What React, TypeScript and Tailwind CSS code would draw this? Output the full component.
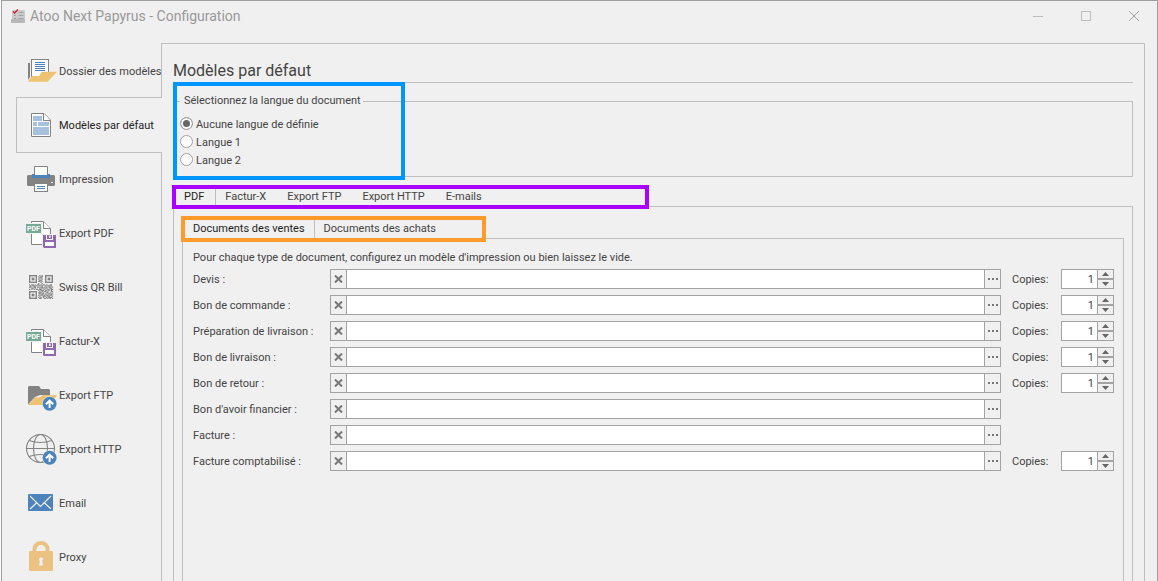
import { useState, type ReactNode } from "react";

function UploadBadge() {
  return (
    <g>
      <circle cx="24.600" cy="24.800" r="7.500" fill="#f0f0f0" />
      <circle cx="24.600" cy="24.800" r="7" fill="#4c83bd" />
      <path d="M24.600 29V22M21 25.200l3.600-3.600 3.600 3.600" fill="none" stroke="#fff" strokeWidth="2" />
    </g>
  );
}

function IconBox({ children }: { children: ReactNode }) {
  return (
    <svg viewBox="0 0 32 32" className="size-8 shrink-0" aria-hidden="true">
      {children}
    </svg>
  );
}

function FolderDocsIcon() {
  return (
    <IconBox>
      <path d="M3 8h2v14l-2 3z" fill="#838383" />
      <rect x="6.5" y="4.5" width="17" height="17" fill="#fff" stroke="#838383" />
      <path d="M10 7.5h10M10 9.5h10M10 11.5h10M10 13.5h10M10 15.5h10" stroke="#4c83bd" />
      <path d="M3 26.8L7 21h7l3-4.2h15L22.5 26.8z" fill="#edc271" />
    </IconBox>
  );
}

function TemplateIcon() {
  return (
    <IconBox>
      <path d="M6.5 4.5h12.5l6.5 6.5v16.5h-19z" fill="#fff" stroke="#838383" />
      <path d="M18.500 4.500v7h7" fill="#fff" stroke="#838383" />
      <path d="M8 7h9v5H8zM8 13h4v4H8zM13 13h11v4H13zM8 18h16v8H8z" fill="#a7c0dd" />
    </IconBox>
  );
}

function PrinterIcon() {
  return (
    <IconBox>
      <path d="M3 12h26l1 1v9l-1 1H3l-1-1v-9z" fill="#838383" />
      <path d="M7 11h18v4H7z" fill="#4c83bd" />
      <path d="M9.5 13V3.500h13V13z" fill="#fff" stroke="#838383" />
      <path d="M8 13.500h16" stroke="#4c83bd" strokeWidth="3" />
      <rect x="26" y="19" width="2" height="1" fill="#fff" />
      <rect x="9.500" y="20.500" width="13" height="8" fill="#fff" stroke="#838383" />
      <path d="M12 23.500h8M12 25.500h8" stroke="#4c83bd" />
    </IconBox>
  );
}

function PdfSaveIcon() {
  return (
    <IconBox>
      <path d="M6.500 4.500h12l7 7v16h-19z" fill="#fff" stroke="#838383" />
      <path d="M18.500 4.500v7h7" fill="#fff" stroke="#838383" />
      <rect x="0" y="6" width="17" height="11" fill="#f0f0f0" />
      <rect x="1" y="7" width="15" height="9" fill="#78a896" />
      <text x="8.500" y="14" textAnchor="middle" fontSize="7" fontWeight="700" fill="#fff" fontFamily="Roboto, sans-serif">
        PDF
      </text>
      <rect x="17" y="17" width="15" height="15" fill="#f0f0f0" />
      <path d="M18 18h13v13H19l-1-1z" fill="#9068b0" />
      <path d="M21 18h7v5h-7zM20 25h9v4h-9z" fill="#fff" />
      <path d="M22 18h5v4h-5z" fill="#9068b0" />
      <path d="M24 18.500h1.500v2.500H24z" fill="#fff" />
    </IconBox>
  );
}

const QR_ROWS = [
  "000000000101000000000",
  "000000001011000000000",
  "000000000110000000000",
  "000000001001000000000",
  "000000000110000000000",
  "000000001101000000000",
  "000000000010000000000",
  "000000001001000000000",
  "101101011010110100110",
  "010110100101001011010",
  "110011011011010101101",
  "001101000101101100110",
  "101010110110010011011",
  "000000001011101101010",
  "000000000101011010011",
  "000000001110100110100",
  "000000000101101001011",
  "000000001011010110110",
  "000000000100111011001",
  "000000001010100101110",
  "000000000110011010101",
];

const QR_MODULES = QR_ROWS.flatMap((row, y) =>
  row.split("").map((cell, x) => (cell === "1" ? `M${x} ${y}h1.100v1.100h-1.100z` : "")),
).join("");

const QR_FINDERS = [
  [0, 0],
  [14, 0],
  [0, 14],
];

function QrIcon() {
  return (
    <IconBox>
      <g transform="translate(4 4) scale(1.143)" fill="#838383">
        <path d={QR_MODULES} />
        {QR_FINDERS.map(([x, y]) => (
          <g key={`${x}-${y}`}>
            <rect x={x + 0.6} y={y + 0.6} width="5.8" height="5.8" fill="none" stroke="#838383" strokeWidth="1.2" />
            <rect x={x + 2.3} y={y + 2.3} width="2.4" height="2.4" />
          </g>
        ))}
      </g>
    </IconBox>
  );
}

function FolderUploadIcon() {
  return (
    <IconBox>
      <path d="M4 7h10l2 3h8l1 1v5H15l-5 2-7 7.500V8z" fill="#838383" />
      <path d="M3 26l7-7.500h4L18 16h14l-6 10z" fill="#edc271" />
      <UploadBadge />
    </IconBox>
  );
}

function GlobeUploadIcon() {
  return (
    <IconBox>
      <g fill="none" stroke="#838383" strokeWidth="1.1">
        <circle cx="15.500" cy="15.500" r="14" />
        <ellipse cx="15.500" cy="15.500" rx="7" ry="14" />
        <path d="M1.500 15.500h28M4 7.500q11.500 4 23 0M4 23.500q11.500-4 23 0" />
      </g>
      <UploadBadge />
    </IconBox>
  );
}

function MailIcon() {
  return (
    <IconBox>
      <rect x="3" y="7" width="25" height="17" rx="1" fill="#4c83bd" />
      <path d="M5 9l10.500 10.500L26 9M5 22l7-6.500M26 22l-7-6.500" fill="none" stroke="#f0f0f0" strokeWidth="1.200" />
    </IconBox>
  );
}

function LockIcon() {
  return (
    <IconBox>
      <path d="M9.500 11V8a6.500 6 0 0 1 13 0V11" fill="none" stroke="#ebc282" strokeWidth="4" />
      <rect x="4" y="10" width="24" height="20" rx="1" fill="#ebc282" />
      <path d="M16 16.500a2 2 0 0 1 1.200 3.600l.8 4.400h-4l.8-4.400A2 2 0 0 1 16 16.500z" fill="#f0f0f0" />
    </IconBox>
  );
}

function AppIcon() {
  return (
    <svg viewBox="0 0 15 15" className="size-[15px]" aria-hidden="true">
      <rect x="1" y="1" width="13" height="11" rx="1" fill="#cbcbcb" />
      <rect x="0" y="10" width="14" height="4" rx="1" fill="#b8b8b8" />
      <path d="M7.500 3.500h5M7.500 6.500h5M3 6.500h2M3 9.500h2M7.500 9.500h5" stroke="#a2a2a2" />
      <path d="M2 2.500l1.500 1.500L7 .5" fill="none" stroke="#c22838" strokeWidth="1.500" />
    </svg>
  );
}

const SECTIONS = [
  { label: "Dossier des modèles", Icon: FolderDocsIcon },
  { label: "Modèles par défaut", Icon: TemplateIcon },
  { label: "Impression", Icon: PrinterIcon },
  { label: "Export PDF", Icon: PdfSaveIcon },
  { label: "Swiss QR Bill", Icon: QrIcon },
  { label: "Factur-X", Icon: PdfSaveIcon },
  { label: "Export FTP", Icon: FolderUploadIcon },
  { label: "Export HTTP", Icon: GlobeUploadIcon },
  { label: "Email", Icon: MailIcon },
  { label: "Proxy", Icon: LockIcon },
];

const LANGUAGES = ["Aucune langue de définie", "Langue 1", "Langue 2"];
const OUTPUTS = ["PDF", "Factur-X", "Export FTP", "Export HTTP", "E-mails"];
const FAMILIES = ["Documents des ventes", "Documents des achats"];

const DOCUMENTS = [
  { id: "devis", label: "Devis :", copies: true },
  { id: "commande", label: "Bon de commande :", copies: true },
  { id: "preparation", label: "Préparation de livraison :", copies: true },
  { id: "livraison", label: "Bon de livraison :", copies: true },
  { id: "retour", label: "Bon de retour :", copies: true },
  { id: "avoir", label: "Bon d'avoir financier :", copies: false },
  { id: "facture", label: "Facture :", copies: false },
  { id: "comptabilise", label: "Facture comptabilisé :", copies: true },
];

function TitleBar() {
  return (
    <header className="flex h-[30px] shrink-0 items-center justify-between text-[#999999]">
      <div className="flex items-center gap-1 pl-[9px]">
        <AppIcon />
        <h1 className="text-[14px] leading-5">Atoo Next Papyrus - Configuration</h1>
      </div>
      <div className="-mr-px flex self-stretch">
        <button type="button" aria-label="Réduire" className="flex w-12 items-center justify-center">
          <svg viewBox="0 0 10 10" className="size-2.5"><path d="M0 5.500h10" stroke="#bdbdbd" /></svg>
        </button>
        <button type="button" aria-label="Agrandir" className="flex w-12 items-center justify-center">
          <svg viewBox="0 0 10 10" className="size-2.5"><path d="M.5 .5h9v9h-9z" fill="none" stroke="#bdbdbd" /></svg>
        </button>
        <button type="button" aria-label="Fermer" className="flex w-12 items-center justify-center">
          <svg viewBox="0 0 10 10" className="size-2.5"><path d="M0 0l10 10M10 0L0 10" stroke="#a6a6a6" /></svg>
        </button>
      </div>
    </header>
  );
}

function Sidebar() {
  const [active, setActive] = useState(1);
  return (
    <nav className="flex w-[146px] shrink-0 flex-col pt-px">
      {SECTIONS.map(({ label, Icon }, i) => (
        <button
          key={label}
          type="button"
          onClick={() => setActive(i)}
          className={
            i === active
              ? "-my-px flex h-14 shrink-0 items-center gap-0.5 border-y border-l border-[#bfbfbf] pl-2 text-left text-[#1e1e1e]"
              : "flex h-[54px] shrink-0 items-center gap-0.5 border-r border-l border-l-transparent border-r-[#bfbfbf] pl-2 text-left"
          }
        >
          <Icon />
          <span className="pt-0.5 whitespace-nowrap">{label}</span>
        </button>
      ))}
    </nav>
  );
}

function LanguageGroup() {
  const [language, setLanguage] = useState(0);
  return (
    <div className="relative mt-[9px]">
      <fieldset className="h-[85px] min-w-0 border border-[#bfbfbf] pl-1.5">
        <legend className="pr-0.5 pl-1 leading-[18px]">Sélectionnez la langue du document</legend>
        <div className="flex flex-col items-start pt-1">
          {LANGUAGES.map((name, i) => (
            <label key={name} className="flex h-[18px] items-center gap-[3px]">
              <input
                type="radio"
                name="language"
                checked={i === language}
                onChange={() => setLanguage(i)}
                className="size-[13px] appearance-none rounded-full border border-[#a3a3a3] bg-white checked:bg-[#666666] checked:shadow-[inset_0_0_0_2px_#ffffff]"
              />
              <span className="pt-[3px]">{name}</span>
            </label>
          ))}
        </div>
      </fieldset>
      <div className="pointer-events-none absolute -top-[10px] left-0 h-[98px] w-[232px] border-4 border-[#0095ff]" />
    </div>
  );
}

function Tabs({ names, tone }: { names: string[]; tone: "outer" | "inner" }) {
  const [active, setActive] = useState(0);
  return (
    <div role="tablist" className={tone === "outer" ? "flex h-5" : "flex h-[22px] pt-0.5"}>
      {names.map((name, i) => (
        <button
          key={name}
          type="button"
          role="tab"
          aria-selected={i === active}
          onClick={() => setActive(i)}
          className={
            i === active
              ? tone === "outer"
                ? "border-x border-[#bfbfbf] pt-0.5 pr-[11px] pl-2.5 text-[#1e1e1e]"
                : "border-x border-[#bfbfbf] pt-0.5 pr-[9px] pl-2.5 text-[#1e1e1e]"
              : tone === "outer"
                ? "pt-0.5 pr-3 pl-[9px]"
                : "px-[9px] pt-0.5"
          }
        >
          {name}
        </button>
      ))}
    </div>
  );
}

function Spinner({ id }: { id: string }) {
  const [count, setCount] = useState(1);
  return (
    <div className="flex h-5 w-[53px] border border-[#a3a3a3] bg-white">
      <input
        id={id}
        inputMode="numeric"
        value={count}
        onChange={(e) => setCount(Number(e.target.value) || 0)}
        className="w-full min-w-0 bg-white pt-0.5 pr-[3px] text-right outline-none"
      />
      <div className="flex w-4 shrink-0 flex-col gap-0.5 border-l border-[#a3a3a3] bg-[#a3a3a3]">
        <button type="button" aria-label="Augmenter" onClick={() => setCount(count + 1)} className="flex flex-1 items-center justify-center bg-[#f0f0f0]">
          <svg viewBox="0 0 7 4" className="h-1 w-[7px]"><path d="M0 4L3.500 0 7 4z" fill="#666" /></svg>
        </button>
        <button type="button" aria-label="Diminuer" onClick={() => setCount(Math.max(0, count - 1))} className="flex flex-1 items-center justify-center bg-[#f0f0f0]">
          <svg viewBox="0 0 7 4" className="h-1 w-[7px]"><path d="M0 0h7L3.500 4z" fill="#666" /></svg>
        </button>
      </div>
    </div>
  );
}

function DocumentRow({ id, label, copies }: { id: string; label: string; copies: boolean }) {
  const [path, setPath] = useState("");
  return (
    <div className="flex h-5 items-center">
      <label htmlFor={id} className="w-[137px] shrink-0 pt-0.5 whitespace-nowrap">{label}</label>
      <div className="flex h-5 min-w-0 flex-1 border border-[#a3a3a3]">
        <button type="button" aria-label="Effacer" onClick={() => setPath("")} className="flex w-4 shrink-0 items-center justify-center border-r border-[#a3a3a3]">
          <svg viewBox="0 0 9 8" className="h-2 w-[9px]"><path d="M1 .5l7 7M8 .5l-7 7" stroke="#777" strokeWidth="2" /></svg>
        </button>
        <input id={id} value={path} onChange={(e) => setPath(e.target.value)} className="min-w-0 flex-1 bg-white px-1 outline-none" />
        <button type="button" aria-label="Parcourir" className="flex w-4 shrink-0 items-center justify-center border-l border-[#a3a3a3]">
          <svg viewBox="0 0 10 2" className="h-0.5 w-2.5"><path d="M0 0h2v2H0zM4 0h2v2H4zM8 0h2v2H8z" fill="#777" /></svg>
        </button>
      </div>
      <div className="flex w-[113px] shrink-0 items-center justify-between pl-[11px]">
        {copies && (
          <>
            <label htmlFor={`${id}-copies`} className="pt-0.5">Copies:</label>
            <Spinner id={`${id}-copies`} />
          </>
        )}
      </div>
    </div>
  );
}

export default function App() {
  return (
    <div className="flex h-screen flex-col overflow-hidden border-l border-[#fafafa] bg-[#f0f0f0] font-['Roboto','Noto_Sans',sans-serif] text-[11px] leading-4 text-[#444444]">
      <div className="flex min-h-0 flex-1 flex-col border-x border-t border-[#a0a0a0]">
        <TitleBar />
        <div className="flex min-h-0 flex-1 pt-3 pr-3 pl-3.5">
          <Sidebar />
          <main className="-ml-px flex min-w-0 flex-1 flex-col border-t border-r border-[#bfbfbf] pr-[11px] pl-3">
            <h2 className="border-b border-[#bfbfbf] pt-4 text-[16px] leading-[22px]">Modèles par défaut</h2>
            <LanguageGroup />
            <section className="relative mt-[9px] flex min-h-0 flex-1 flex-col">
              <Tabs names={OUTPUTS} tone="outer" />
              <div className="pointer-events-none absolute -top-px -left-px h-6 w-[477px] border-4 border-[#aa00ff]" />
              <div className="flex min-h-0 flex-1 flex-col border-x border-t border-[#bfbfbf] px-2 pt-[9px]">
                <div className="relative flex min-h-0 flex-1 flex-col">
                  <Tabs names={FAMILIES} tone="inner" />
                  <div className="pointer-events-none absolute top-0 -left-px h-[26px] w-[305px] border-4 border-[#ff9a2b]" />
                  <div className="flex min-h-0 flex-1 flex-col border-x border-t border-[#bfbfbf] pt-[11px] pr-[9px] pl-2.5">
                    <p>Pour chaque type de document, configurez un modèle d'impression ou bien laissez le vide.</p>
                    <div className="flex flex-col gap-1.5 pt-[3px]">
                      {DOCUMENTS.map((doc) => (
                        <DocumentRow key={doc.id} {...doc} />
                      ))}
                    </div>
                  </div>
                </div>
              </div>
            </section>
          </main>
        </div>
      </div>
    </div>
  );
}
